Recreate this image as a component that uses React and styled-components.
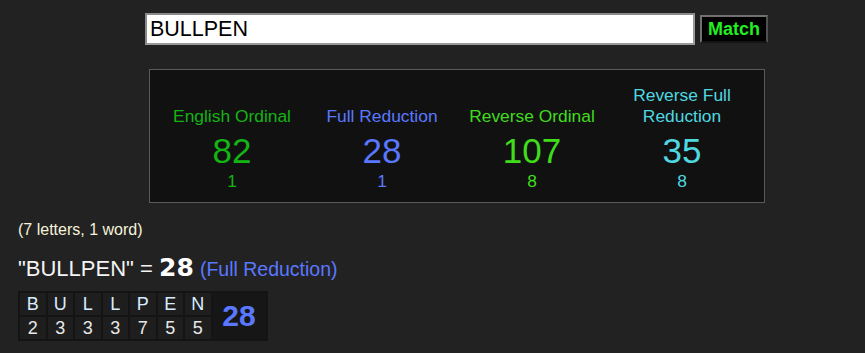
import React from 'react';
import styled, { createGlobalStyle } from 'styled-components';

const GlobalStyle = createGlobalStyle`
  html, body {
    margin: 0;
    padding: 0;
    background: #222222;
    font-family: "Liberation Sans", Arial, sans-serif;
  }
`;

const Page = styled.div`
  padding-top: 13px;
  min-height: 340px;
`;

const SearchRow = styled.form`
  display: flex;
  align-items: center;
  gap: 5px;
  margin-left: 145px;
`;

const SearchInput = styled.input`
  box-sizing: border-box;
  width: 550px;
  height: 32px;
  padding: 0 3px;
  border: 2px solid;
  border-color: #8a8a8a #9a9a9a #9a9a9a #8a8a8a;
  background: #fff;
  color: #000;
  font-family: "Liberation Sans", Arial, sans-serif;
  font-size: 21.5px;
  outline: none;
`;

const MatchButton = styled.button`
  box-sizing: border-box;
  height: 28px;
  width: 68px;
  padding: 0;
  background: #000;
  border: 2px solid;
  border-color: #707070 #505050 #151515 #707070;
  color: #22ee22;
  font-family: "Liberation Sans", Arial, sans-serif;
  font-weight: bold;
  font-size: 18px;
`;

const Panel = styled.div`
  box-sizing: border-box;
  width: 616px;
  margin: 24px 0 0 149px;
  padding: 15px 7px 10px;
  background: #111111;
  border: 1px solid #5a5a5a;
  display: grid;
  grid-template-columns: repeat(4, 150px);
`;

const Cipher = styled.div`
  display: flex;
  flex-direction: column;
  justify-content: flex-end;
  align-items: center;
  text-align: center;
  color: ${({ color }) => color};
`;

const CipherName = styled.div`
  font-size: 17.4px;
  line-height: 21px;
  padding: 0 8px;
`;

const CipherValue = styled.div`
  font-size: 35px;
  line-height: 40px;
  margin-top: 4px;
`;

const CipherSub = styled.div`
  font-size: 17.4px;
  line-height: 21px;
`;

const Count = styled.div`
  margin: 18px 0 0 18px;
  font-size: 16px;
  line-height: 18px;
  color: #f6f3da;
`;

const Title = styled.div`
  margin: 15px 0 0 18px;
  font-size: 22px;
  line-height: 28px;
  color: #f4f4f4;
`;

const TitleValue = styled.span`
  font-family: "DejaVu Sans", sans-serif;
  font-weight: bold;
  font-size: 25px;
  color: #fff;
`;

const TitleCipher = styled.span`
  font-size: 19.5px;
  color: #5a78ff;
`;

const Breakdown = styled.div`
  display: inline-grid;
  grid-template-columns: repeat(7, 25.5px) 53px;
  grid-template-rows: 22px 22px;
  gap: 2px;
  padding: 2px;
  margin: 8px 0 0 18px;
  background: #141414;
`;

const Cell = styled.div`
  display: flex;
  align-items: center;
  justify-content: center;
  background: #1e1e1e;
  font-size: 18px;
  color: ${({ letter }) => (letter ? '#d8ecff' : '#e8e8e8')};
`;

const Total = styled.div`
  grid-column: 8;
  grid-row: 1 / span 2;
  display: flex;
  align-items: center;
  justify-content: center;
  background: #161616;
  font-weight: bold;
  font-size: 30px;
  color: #5a78ff;
`;

const ciphers = [
  { name: 'English Ordinal', value: 82, sub: 1, color: '#14b414' },
  { name: 'Full Reduction', value: 28, sub: 1, color: '#5a78ff' },
  { name: 'Reverse Ordinal', value: 107, sub: 8, color: '#40dc1c' },
  { name: 'Reverse Full Reduction', value: 35, sub: 8, color: '#50d8e0' },
];

const word = 'BULLPEN';
const reduce = (ch) => ((ch.charCodeAt(0) - 65) % 9) + 1;

const App = () => (
  <>
    <GlobalStyle />
    <Page>
      <SearchRow onSubmit={(e) => e.preventDefault()}>
        <SearchInput defaultValue={word} />
        <MatchButton type="submit">Match</MatchButton>
      </SearchRow>

      <Panel>
        {ciphers.map((c) => (
          <Cipher key={c.name} color={c.color}>
            <CipherName>{c.name}</CipherName>
            <CipherValue>{c.value}</CipherValue>
            <CipherSub>{c.sub}</CipherSub>
          </Cipher>
        ))}
      </Panel>

      <Count>(7 letters, 1 word)</Count>
      <Title>
        "{word}" = <TitleValue>28</TitleValue> <TitleCipher>(Full Reduction)</TitleCipher>
      </Title>

      <Breakdown>
        {word.split('').map((ch, i) => (
          <Cell letter key={`l${i}`} style={{ gridColumn: i + 1, gridRow: 1 }}>
            {ch}
          </Cell>
        ))}
        {word.split('').map((ch, i) => (
          <Cell key={`n${i}`} style={{ gridColumn: i + 1, gridRow: 2 }}>
            {reduce(ch)}
          </Cell>
        ))}
        <Total>28</Total>
      </Breakdown>
    </Page>
  </>
);

export default App;
